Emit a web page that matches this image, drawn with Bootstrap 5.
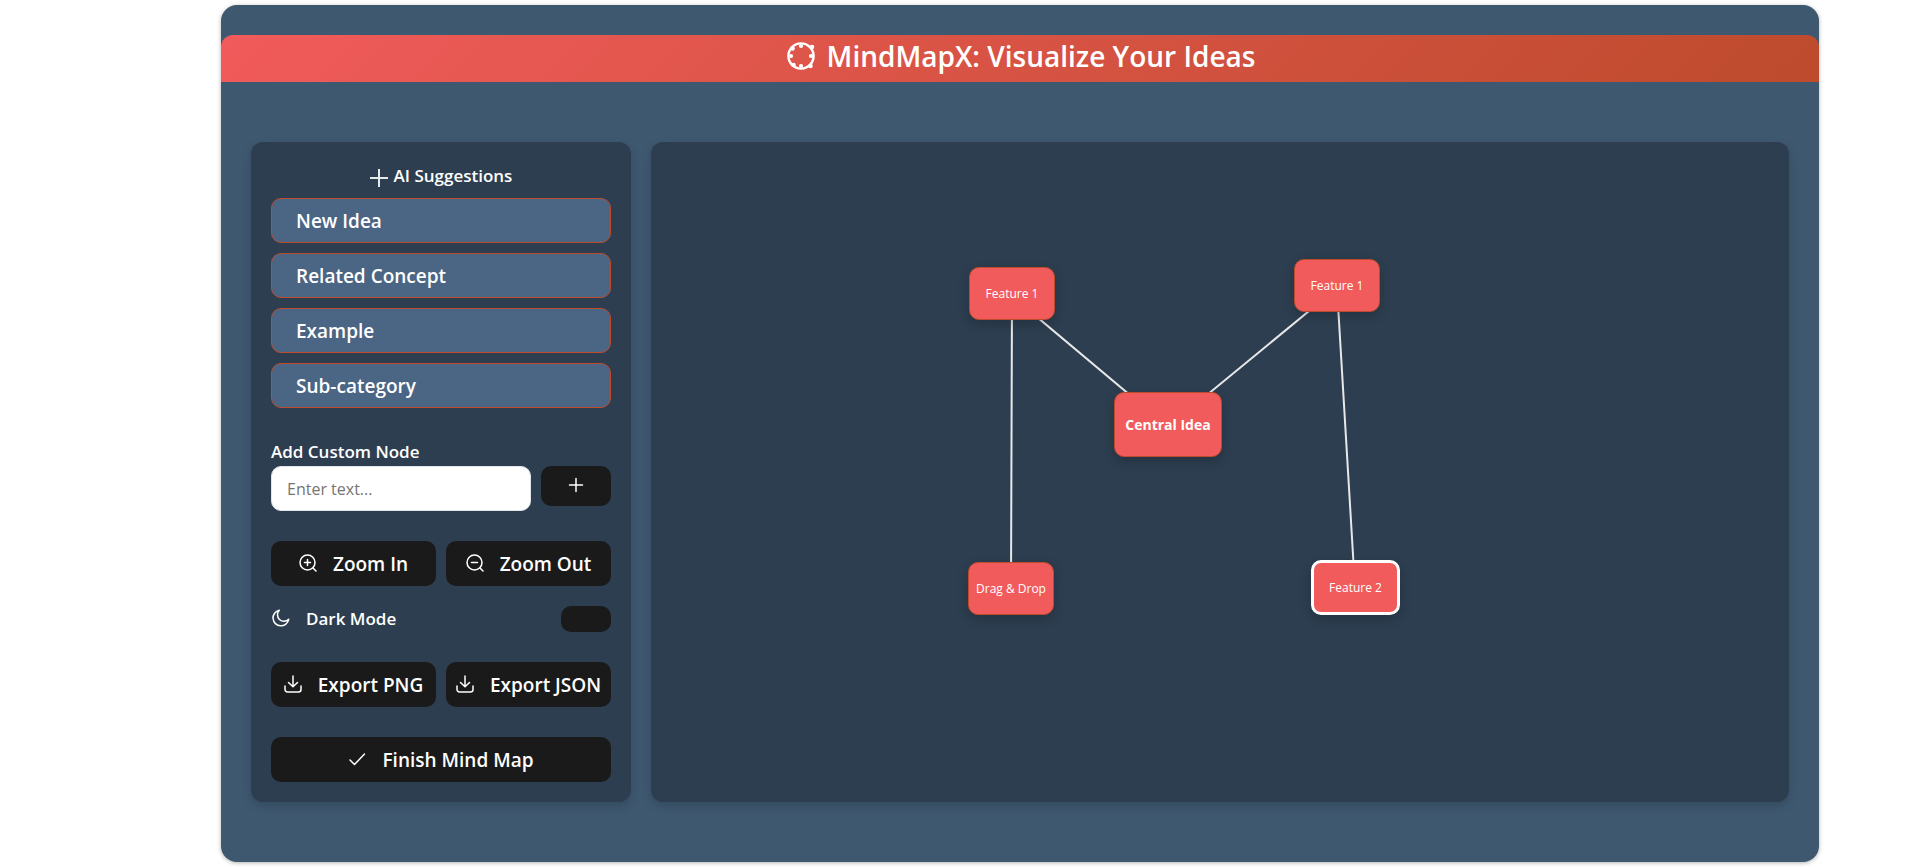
<!DOCTYPE html>
<html lang="en">
<head>
<meta charset="utf-8">
<meta name="viewport" content="width=device-width, initial-scale=1">
<title>MindMapX</title>
<link rel="stylesheet" href="https://cdn.jsdelivr.net/npm/bootstrap@5.3.0/dist/css/bootstrap.min.css">
<style>
  body { font-family: "Open Sans", "Noto Sans", sans-serif; background: #fff; color: #fff; }
  .page-wrap { padding: 5px 101px 5px 221px; }
  .app-shell { background: #3e5870; border-radius: 16px; padding: 30px 0 60px; box-shadow: 0 1px 4px rgba(0,0,0,.3); }
  .app-header { height: 47px; background: linear-gradient(135deg, #f15b5b, #bd4b2c); border-radius: 12px 12px 0 0; padding-bottom: 6px; gap: 10px; }
  .app-title { font-size: 28px; line-height: 36px; font-weight: 600; }
  .workspace { gap: 20px; padding: 60px 30px 0; }
  .panel { background: #2d3e50; border-radius: 12px; box-shadow: 0 4px 10px rgba(0,0,0,.15); }
  .side { width: 380px; padding: 20px; }
  .side-title { font-size: 17px; line-height: 28px; font-weight: 600; margin-bottom: 8px; gap: 6px; }
  .side-title svg { margin-top: 3px; }
  .stack { gap: 10px; margin-bottom: 24px; }
  .pill { height: 45px; border: 0; border-radius: 10px; font-size: 19px; line-height: 24px; font-weight: 600; color: #fff; }
  .idea { background: #4b6584; border: 1px solid #bd4b2c; padding: 0 24px; text-align: left; }
  .dark { background: #1a1a1a; display: flex; align-items: center; justify-content: center; gap: 16px; padding: 0; white-space: nowrap; flex: 1 1 0; }
  .dark svg, .mode svg { flex: none; margin-bottom: 2px; }
  .caption { font-size: 17px; line-height: 24px; font-weight: 600; }
  .field-label { margin-bottom: 2px; }
  .pair { gap: 10px; margin-bottom: 30px; }
  .entry { height: 45px; border: 1px solid #e1e4e8; border-radius: 10px; padding: 0 15px; font-size: 16px; color: #333; min-width: 0; }
  .entry::placeholder { color: #757575; }
  .add { flex: none; width: 70px; height: 40px; }
  .pair.zoom { margin-bottom: 20px; }
  .mode { margin-bottom: 30px; height: 26px; }
  .mode .caption { gap: 16px; }
  .toggle { appearance: none; width: 50px; height: 26px; border-radius: 10px; background: #1a1a1a; margin: 0; }
  .board { position: relative; min-width: 0; overflow: hidden; }
  .links { position: absolute; left: 0; top: 0; width: 100%; height: 100%; }
  .mm-node { position: absolute; width: 86px; height: 53px; border: 1px solid #bd4b2c; border-radius: 10px; background: #f15b5b; color: #fff; font-size: 12px; line-height: 18px; padding: 0; white-space: nowrap; box-shadow: 0 4px 12px rgba(0,0,0,.2); }
  .mm-node.hub { width: 108px; height: 65px; font-size: 14px; font-weight: 700; }
  .mm-node.chosen { width: 89px; height: 55px; border: 3px solid #fff; }
</style>
</head>
<body>
<div class="page-wrap">
<main class="app-shell">
  <header class="app-header d-flex align-items-center justify-content-center">
    <svg width="32" height="32" viewBox="0 0 32 32" fill="#fff" aria-hidden="true">
      <circle cx="16" cy="16" r="12.600" fill="none" stroke="#fff" stroke-width="2.400"/>
      <circle cx="16" cy="6" r="2.100"/><circle cx="16" cy="26" r="2.100"/>
      <circle cx="6" cy="16" r="2.100"/><circle cx="26" cy="16" r="2.100"/>
      <circle cx="7.500" cy="8.500" r="2.300"/><circle cx="27" cy="7" r="2.300"/>
      <circle cx="8.500" cy="25" r="2.300"/><circle cx="25.500" cy="26" r="2.300"/>
    </svg>
    <h1 class="app-title m-0">MindMapX: Visualize Your Ideas</h1>
  </header>
  <div class="workspace d-flex">
    <aside class="panel side flex-shrink-0">
      <h2 class="side-title d-flex align-items-center justify-content-center">
        <svg width="18" height="18" viewBox="0 0 18 18" stroke="#e6e9ec" stroke-width="2" aria-hidden="true"><path d="M9 0v18M0 9h18"/></svg>
        AI Suggestions
      </h2>
      <div class="stack d-flex flex-column">
        <button class="pill idea" type="button">New Idea</button>
        <button class="pill idea" type="button">Related Concept</button>
        <button class="pill idea" type="button">Example</button>
        <button class="pill idea" type="button">Sub-category</button>
      </div>
      <label class="caption field-label d-block pt-2" for="custom">Add Custom Node</label>
      <div class="pair d-flex align-items-start">
        <input class="entry flex-grow-1" id="custom" type="text" placeholder="Enter text...">
        <button class="pill dark add" type="button" aria-label="Add node">
          <svg width="18" height="18" viewBox="0 0 18 18" stroke="#fff" stroke-width="1.500" stroke-linecap="round"><path d="M9 2.500v13M2.500 9h13"/></svg>
        </button>
      </div>
      <div class="pair zoom d-flex">
        <button class="pill dark" type="button"><svg width="18" height="18" viewBox="0 0 18 18" fill="none" stroke="#fff" stroke-width="1.500" stroke-linecap="round"><circle cx="8.500" cy="8.500" r="7.500"/><path d="M14 14l3 3M8.500 5.500v6M5.500 8.500h6"/></svg>Zoom In</button>
        <button class="pill dark" type="button"><svg width="18" height="18" viewBox="0 0 18 18" fill="none" stroke="#fff" stroke-width="1.500" stroke-linecap="round"><circle cx="8.500" cy="8.500" r="7.500"/><path d="M14 14l3 3M5.500 8.500h6"/></svg>Zoom Out</button>
      </div>
      <div class="mode d-flex align-items-center justify-content-between">
        <label class="caption d-flex align-items-center" for="darkmode">
          <svg width="19" height="18" viewBox="0 0 19 18" fill="none" stroke="#fff" stroke-width="1.500" stroke-linejoin="round"><path d="M8.300 1.200A7.900 7.900 0 1 0 17.700 10.300A6.300 6.300 0 0 1 8.300 1.200Z"/></svg>Dark Mode</label>
        <input class="toggle" id="darkmode" type="checkbox">
      </div>
      <div class="pair d-flex">
        <button class="pill dark" type="button"><svg width="18" height="18" viewBox="0 0 18 18" fill="none" stroke="#fff" stroke-width="1.500" stroke-linecap="round" stroke-linejoin="round"><path d="M9 1v10.500M4.500 7.500L9 11.800l4.500-4.300M1 11v3.500a2.500 2.500 0 0 0 2.500 2.500h11a2.500 2.500 0 0 0 2.500-2.500V11"/></svg>Export PNG</button>
        <button class="pill dark" type="button"><svg width="18" height="18" viewBox="0 0 18 18" fill="none" stroke="#fff" stroke-width="1.500" stroke-linecap="round" stroke-linejoin="round"><path d="M9 1v10.500M4.500 7.500L9 11.800l4.500-4.300M1 11v3.500a2.500 2.500 0 0 0 2.500 2.500h11a2.500 2.500 0 0 0 2.500-2.500V11"/></svg>Export JSON</button>
      </div>
      <button class="pill dark w-100" type="button"><svg width="18" height="18" viewBox="0 0 18 18" fill="none" stroke="#fff" stroke-width="1.500" stroke-linecap="round" stroke-linejoin="round"><path d="M2 10l4.500 4.500L16.500 4"/></svg>Finish Mind Map</button>
    </aside>
    <section class="panel board flex-grow-1" aria-label="Mind map">
      <svg class="links" stroke="#e8e8e8" stroke-width="2" aria-hidden="true">
        <path d="M517 285L361 154L360 446M517 285L686 146L704 446" fill="none"/>
      </svg>
      <button class="mm-node" type="button" style="left:318px;top:125px">Feature 1</button>
      <button class="mm-node" type="button" style="left:643px;top:117px">Feature 1</button>
      <button class="mm-node hub" type="button" style="left:463px;top:250px">Central Idea</button>
      <button class="mm-node" type="button" style="left:317px;top:420px">Drag &amp; Drop</button>
      <button class="mm-node chosen" type="button" style="left:660px;top:418px">Feature 2</button>
    </section>
  </div>
</main>
</div>
<script src="https://cdn.jsdelivr.net/npm/bootstrap@5.3.0/dist/js/bootstrap.bundle.min.js"></script>
</body>
</html>
